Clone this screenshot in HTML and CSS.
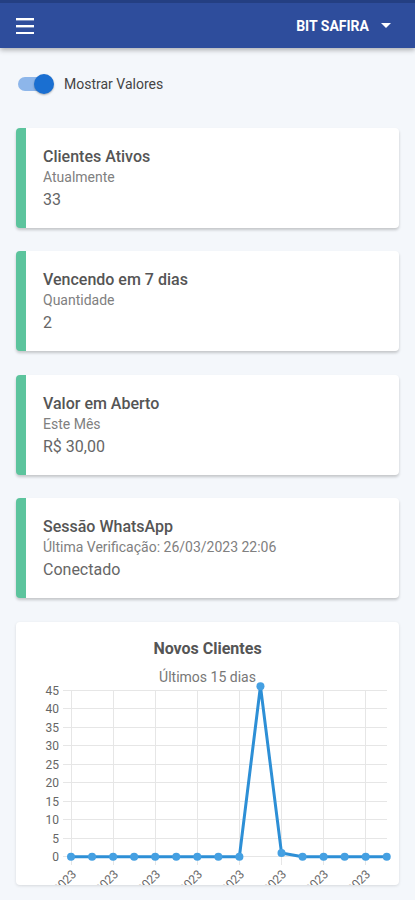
FILE: index.html
```html
<!DOCTYPE html>
<html lang="pt-BR">

<head>
    <meta charset="UTF-8">
    <meta name="viewport" content="width=device-width, initial-scale=1.0">
    <title>Dashboard</title>
    <link rel="stylesheet" href="styles.css">
</head>

<body>
    <header class="topbar">
        <button class="topbar__menu" type="button">
            <svg width="18" height="16" viewBox="0 0 18 16">
                <rect x="0" y="0" width="18" height="2.4" fill="#fff" />
                <rect x="0" y="7" width="18" height="2.4" fill="#fff" />
                <rect x="0" y="14" width="18" height="2.4" fill="#fff" />
            </svg>
        </button>
        <div class="topbar__company">
            BIT SAFIRA
            <span class="topbar__caret"></span>
        </div>
    </header>

    <main class="page">
        <label class="switch-row">
            <span class="switch">
                <span class="switch__track"></span>
                <span class="switch__knob"></span>
            </span>
            Mostrar Valores
        </label>

        <div class="card">
            <h3 class="card__title">Clientes Ativos</h3>
            <div class="card__sub">Atualmente</div>
            <div class="card__value">33</div>
        </div>

        <div class="card">
            <h3 class="card__title">Vencendo em 7 dias</h3>
            <div class="card__sub">Quantidade</div>
            <div class="card__value">2</div>
        </div>

        <div class="card">
            <h3 class="card__title">Valor em Aberto</h3>
            <div class="card__sub">Este Mês</div>
            <div class="card__value">R$ 30,00</div>
        </div>

        <div class="card">
            <h3 class="card__title">Sessão WhatsApp</h3>
            <div class="card__sub">Última Verificação: 26/03/2023 22:06</div>
            <div class="card__value">Conectado</div>
        </div>

        <section class="chart-card">
            <h2 class="chart-card__title">Novos Clientes</h2>
            <div class="chart-card__sub">Últimos 15 dias</div>
            <svg class="chart" width="384" height="206" viewBox="0 0 384 206">
                <g class="chart__grid">
                    <line x1="47" y1="11.5" x2="371" y2="11.5" />
                    <line x1="47" y1="29.5" x2="371" y2="29.5" />
                    <line x1="47" y1="48.5" x2="371" y2="48.5" />
                    <line x1="47" y1="66.5" x2="371" y2="66.5" />
                    <line x1="47" y1="85.5" x2="371" y2="85.5" />
                    <line x1="47" y1="103.5" x2="371" y2="103.5" />
                    <line x1="47" y1="122.5" x2="371" y2="122.5" />
                    <line x1="47" y1="140.5" x2="371" y2="140.5" />
                    <line x1="47" y1="159.5" x2="371" y2="159.5" />
                    <line x1="47" y1="177.5" x2="371" y2="177.5" />

                    <line x1="55.5" y1="11" x2="55.5" y2="186" />
                    <line x1="97.5" y1="11" x2="97.5" y2="186" />
                    <line x1="139.5" y1="11" x2="139.5" y2="186" />
                    <line x1="181.5" y1="11" x2="181.5" y2="186" />
                    <line x1="223.5" y1="11" x2="223.5" y2="186" />
                    <line x1="265.5" y1="11" x2="265.5" y2="186" />
                    <line x1="307.5" y1="11" x2="307.5" y2="186" />
                    <line x1="349.5" y1="11" x2="349.5" y2="186" />
                </g>

                <g class="chart__ylabels">
                    <text x="43" y="15.5">45</text>
                    <text x="43" y="34">40</text>
                    <text x="43" y="52.5">35</text>
                    <text x="43" y="71">30</text>
                    <text x="43" y="89.5">25</text>
                    <text x="43" y="108">20</text>
                    <text x="43" y="126.5">15</text>
                    <text x="43" y="145">10</text>
                    <text x="43" y="163.5">5</text>
                    <text x="43" y="182">0</text>
                </g>

                <g class="chart__xlabels">
                    <text transform="translate(61 196) rotate(-45)">11/03/2023</text>
                    <text transform="translate(103 196) rotate(-45)">13/03/2023</text>
                    <text transform="translate(145 196) rotate(-45)">15/03/2023</text>
                    <text transform="translate(187 196) rotate(-45)">17/03/2023</text>
                    <text transform="translate(229 196) rotate(-45)">19/03/2023</text>
                    <text transform="translate(271 196) rotate(-45)">21/03/2023</text>
                    <text transform="translate(313 196) rotate(-45)">23/03/2023</text>
                    <text transform="translate(355 196) rotate(-45)">25/03/2023</text>
                </g>

                <polyline class="chart__line"
                    points="55,177.7 76.05,177.7 97.1,177.7 118.15,177.7 139.2,177.7 160.25,177.7 181.3,177.7 202.35,177.7 223.4,177.7 244.45,7.3 265.5,174 286.55,177.7 307.6,177.7 328.65,177.7 349.7,177.7 370.75,177.7" />

                <g class="chart__dots">
                    <circle cx="55" cy="177.7" r="4" />
                    <circle cx="76.05" cy="177.7" r="4" />
                    <circle cx="97.1" cy="177.7" r="4" />
                    <circle cx="118.15" cy="177.7" r="4" />
                    <circle cx="139.2" cy="177.7" r="4" />
                    <circle cx="160.25" cy="177.7" r="4" />
                    <circle cx="181.3" cy="177.7" r="4" />
                    <circle cx="202.35" cy="177.7" r="4" />
                    <circle cx="223.4" cy="177.7" r="4" />
                    <circle cx="244.45" cy="7.3" r="4" />
                    <circle cx="265.5" cy="174" r="4" />
                    <circle cx="286.55" cy="177.7" r="4" />
                    <circle cx="307.6" cy="177.7" r="4" />
                    <circle cx="328.65" cy="177.7" r="4" />
                    <circle cx="349.7" cy="177.7" r="4" />
                    <circle cx="370.75" cy="177.7" r="4" />
                </g>
            </svg>
        </section>
    </main>
</body>

</html>
```

FILE: styles.css
```css
* {
    padding: 0;
    margin: 0;
    box-sizing: border-box;
}

body {
    font-family: Roboto, 'Noto Sans', sans-serif;
    background-color: #f4f7fb;
    color: #555;
    font-size: 14px;
}

/* top bar */
.topbar {
    height: 48px;
    display: flex;
    align-items: center;
    justify-content: space-between;
    padding: 0 24px 0 16px;
    background-color: #2e4d9c;
    border-top: 3px solid #243f82;
    box-shadow: 0 2px 5px rgba(0, 0, 0, 0.3);
}

.topbar__menu {
    display: flex;
    border: none;
    background: none;
}

.topbar__company {
    display: flex;
    align-items: center;
    gap: 12px;
    color: #fff;
    font-weight: 700;
    font-size: 14px;
}

.topbar__caret {
    width: 0;
    height: 0;
    border-left: 5px solid transparent;
    border-right: 5px solid transparent;
    border-top: 5px solid #fff;
}

/* content */
.page {
    padding: 24px 16px 16px;
    display: flex;
    flex-direction: column;
    gap: 23.5px;
}

.switch-row {
    display: flex;
    align-items: center;
    gap: 10px;
    height: 24px;
    margin-left: 2px;
    margin-bottom: 8px;
    font-size: 14px;
    color: #444;
}

.switch {
    position: relative;
    width: 36px;
    height: 20px;
    display: flex;
    align-items: center;
}

.switch__track {
    width: 32px;
    height: 14px;
    border-radius: 7px;
    background-color: #8db6ea;
}

.switch__knob {
    position: absolute;
    left: 16px;
    top: 0;
    width: 20px;
    height: 20px;
    border-radius: 50%;
    background-color: #1a6fd1;
    box-shadow: 0 1px 2px rgba(0, 0, 0, 0.3);
}

.card {
    height: 100px;
    padding: 19px 16px 0 17px;
    background-color: #fff;
    border-left: 10px solid #5cc49d;
    border-radius: 4px;
    box-shadow: 0 2px 3px rgba(0, 0, 0, 0.2);
}

.card__title {
    font-size: 16px;
    line-height: 20px;
    font-weight: 500;
    color: #555;
}

.card__sub {
    font-size: 14px;
    line-height: 20px;
    color: #808080;
}

.card__value {
    margin-top: 1px;
    font-size: 16px;
    line-height: 24px;
    color: #666;
}

.chart-card {
    height: 263px;
    padding-top: 17px;
    background-color: #fff;
    border-radius: 4px;
    box-shadow: 0 1px 3px rgba(0, 0, 0, 0.12);
    overflow: hidden;
}

.chart-card__title {
    text-align: center;
    font-size: 16px;
    line-height: 20px;
    font-weight: 700;
    color: #555;
}

.chart-card__sub {
    margin-top: 8px;
    margin-bottom: -8px;
    text-align: center;
    font-size: 14px;
    line-height: 20px;
    color: #777;
    position: relative;
}

.chart {
    display: block;
}

.chart__grid line {
    stroke: #e6e6e6;
    stroke-width: 1;
}

.chart__ylabels text {
    font-family: Roboto, sans-serif;
    font-size: 12px;
    fill: #666;
    text-anchor: end;
}

.chart__xlabels text {
    font-family: Roboto, sans-serif;
    font-size: 12px;
    fill: #666;
    text-anchor: end;
}

.chart__line {
    fill: none;
    stroke: #2d8fd6;
    stroke-width: 3;
    stroke-linejoin: round;
}

.chart__dots circle {
    fill: #45a0e2;
}
```
